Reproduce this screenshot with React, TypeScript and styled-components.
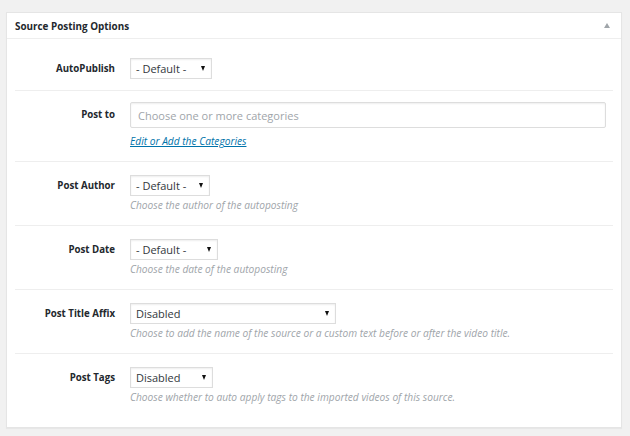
import styled, { createGlobalStyle } from "styled-components";

const GlobalStyle = createGlobalStyle`
  html, body {
    margin: 0;
    padding: 0;
    background: #f1f1f1;
    font-family: "Open Sans", "Noto Sans", sans-serif;
    color: #23282d;
  }
`;

const Page = styled.div`
  padding: 12px 8px 8px 6px;
`;

const Panel = styled.section`
  background: #fff;
  border: 1px solid #e5e5e5;
  box-shadow: 0 1px 1px rgba(0, 0, 0, 0.04);
`;

const Header = styled.header`
  height: 25px;
  display: flex;
  align-items: center;
  justify-content: space-between;
  padding: 0 11px 0 8px;
  border-bottom: 1px solid #eee;
`;

const Title = styled.h2`
  margin: 0;
  font-size: 9.9px;
  font-weight: 700;
  color: #23282d;
`;

const Toggle = styled.span`
  width: 0;
  height: 0;
  border-left: 3.5px solid transparent;
  border-right: 3.5px solid transparent;
  border-bottom: 5px solid #a0a5aa;
`;

const Body = styled.div`
  padding: 6px 8px 10px;
`;

const Row = styled.div<{ $last?: boolean; $top?: number }>`
  display: grid;
  grid-template-columns: 115px 1fr;
  padding: ${(p) => p.$top ?? 13}px 0 11px;
  border-bottom: ${(p) => (p.$last ? "none" : "1px solid #eee")};
`;

const Label = styled.div<{ $tall?: boolean }>`
  text-align: right;
  padding-right: 15px;
  font-size: 9.7px;
  font-weight: 700;
  line-height: ${(p) => (p.$tall ? "26px" : "21px")};
  color: #23282d;
`;

const Field = styled.div`
  display: flex;
  flex-direction: column;
  align-items: flex-start;
`;

const Select = styled.div<{ $w: number }>`
  box-sizing: border-box;
  width: ${(p) => p.$w}px;
  height: 21px;
  display: flex;
  align-items: center;
  justify-content: space-between;
  padding: 0 6px 0 5px;
  border: 1px solid #ddd;
  box-shadow: inset 0 1px 2px rgba(0, 0, 0, 0.07);
  background: #fff;
  font-size: 11px;
  color: #32373c;
`;

const Arrow = styled.span`
  width: 0;
  height: 0;
  border-left: 2.5px solid transparent;
  border-right: 2.5px solid transparent;
  border-top: 5px solid #111;
`;

const TextInput = styled.div`
  box-sizing: border-box;
  width: 476px;
  height: 26px;
  display: flex;
  align-items: center;
  padding: 0 7px;
  border: 1px solid #ddd;
  border-radius: 2px;
  box-shadow: inset 0 1px 2px rgba(0, 0, 0, 0.07);
  font-size: 11px;
  color: #a0a5aa;
`;

const EditLink = styled.a`
  margin-top: 4px;
  font-size: 10.2px;
  font-style: italic;
  line-height: 18px;
  color: #0073aa;
  text-decoration: underline;
  cursor: pointer;
`;

const Description = styled.p`
  margin: 0;
  font-size: 10.2px;
  font-style: italic;
  line-height: 18px;
  color: #a0a5aa;
`;

type Option = { label: string; value: string; width: number; description?: string };

const options: Option[] = [
  { label: "Post Author", value: "- Default -", width: 80, description: "Choose the author of the autoposting" },
  { label: "Post Date", value: "- Default -", width: 88, description: "Choose the date of the autoposting" },
  {
    label: "Post Title Affix",
    value: "Disabled",
    width: 206,
    description: "Choose to add the name of the source or a custom text before or after the video title.",
  },
  {
    label: "Post Tags",
    value: "Disabled",
    width: 83,
    description: "Choose whether to auto apply tags to the imported videos of this source.",
  },
];

export default function App() {
  return (
    <Page>
      <GlobalStyle />
      <Panel>
        <Header>
          <Title>Source Posting Options</Title>
          <Toggle />
        </Header>
        <Body>
          <Row>
            <Label>AutoPublish</Label>
            <Field>
              <Select $w={82}>
                - Default -
                <Arrow />
              </Select>
            </Field>
          </Row>
          <Row $top={11}>
            <Label $tall>Post to</Label>
            <Field>
              <TextInput>Choose one or more categories</TextInput>
              <EditLink>Edit or Add the Categories</EditLink>
            </Field>
          </Row>
          {options.map((o, i) => (
            <Row key={o.label} $last={i === options.length - 1}>
              <Label>{o.label}</Label>
              <Field>
                <Select $w={o.width}>
                  {o.value}
                  <Arrow />
                </Select>
                {o.description && <Description>{o.description}</Description>}
              </Field>
            </Row>
          ))}
        </Body>
      </Panel>
    </Page>
  );
}
